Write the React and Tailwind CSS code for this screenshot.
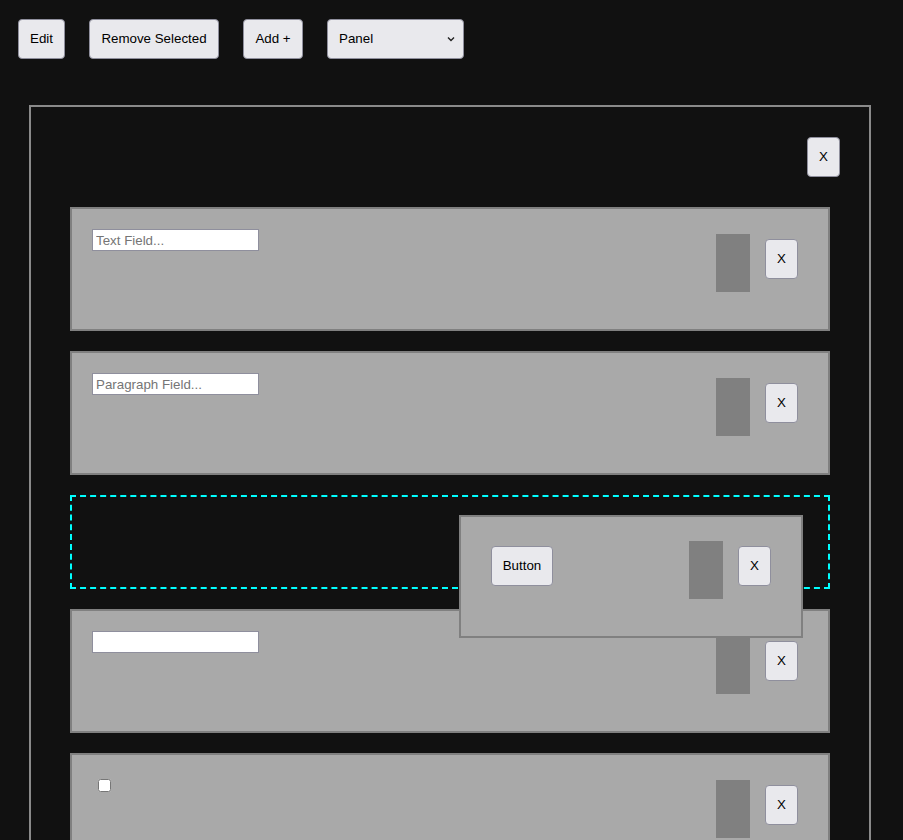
import React from 'react';

const btn = 'bg-[#e9e9ed] border border-[#8f8f9d] rounded-[4px] text-black text-[13.33px] h-[40px] leading-none';

const Field = ({ children }) => (
  <div className="h-[124px] border-2 border-[#808080] bg-[#a9a9a9] flex justify-between pl-[20px] pt-[20px] pr-[30px]">
    <div>{children}</div>
    <div className="flex items-start gap-[15px]">
      <div className="w-[34px] h-[58px] bg-[#808080] mt-[5px]" />
      <button className={`${btn} w-[33px] mt-[10px]`}>X</button>
    </div>
  </div>
);

const textInput = 'block w-[167px] h-[22px] bg-white border border-[#8f8f9d] px-[3px] text-[13.33px] text-black placeholder:text-[#757575] outline-none';

const App = () => (
  <div className="min-h-[840px] bg-[#111111] font-['Liberation_Sans',Arial,sans-serif] overflow-hidden">
    <div className="flex gap-[24px] pl-[18px] pt-[19px]">
      <button className={`${btn} w-[47px]`}>Edit</button>
      <button className={`${btn} w-[130px]`}>Remove Selected</button>
      <button className={`${btn} w-[60px]`}>Add +</button>
      <div className={`${btn} w-[137px] flex items-center justify-between pl-[11px] pr-[8px]`}>
        <span>Panel</span>
        <svg width="8" height="6" viewBox="0 0 8 6" fill="none" stroke="#222" strokeWidth="1.4">
          <path d="M1 1.5 L4 4.5 L7 1.5" />
        </svg>
      </div>
    </div>

    <div className="relative ml-[29px] mt-[46px] w-[842px] border-2 border-[#8a8a8a] pt-[30px] pb-[40px]">
      <div className="flex justify-end pr-[29px]">
        <button className={`${btn} w-[33px]`}>X</button>
      </div>
      <div className="mx-[39px] mt-[30px] flex flex-col gap-[20px]">
        <Field>
          <input className={textInput} placeholder="Text Field..." />
        </Field>
        <Field>
          <input className={textInput} placeholder="Paragraph Field..." />
        </Field>
        <div className="h-[94px] border-2 border-dashed border-[#00ffff]" />
        <Field>
          <input className={textInput} />
        </Field>
        <Field>
          <input type="checkbox" className="block m-0 ml-[6px] mt-[4px] w-[13px] h-[13px]" />
        </Field>
      </div>

      {/* dragged item overlay */}
      <div className="absolute left-[428px] top-[408px] w-[344px] h-[123px] border-2 border-[#808080] bg-[#a9a9a9] flex justify-between pl-[30px] pt-[29px] pr-[30px]">
        <button className={`${btn} w-[62px]`}>Button</button>
        <div className="flex items-start gap-[15px] -mt-[5px]">
          <div className="w-[34px] h-[58px] bg-[#808080]" />
          <button className={`${btn} w-[33px] mt-[5px]`}>X</button>
        </div>
      </div>
    </div>
  </div>
);

export default App;
